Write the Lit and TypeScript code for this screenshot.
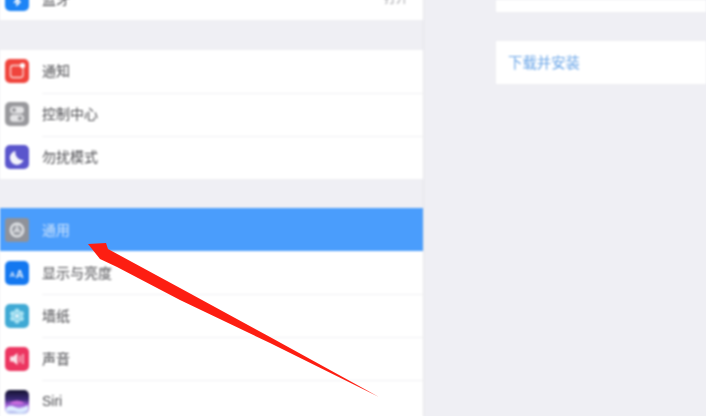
import { LitElement, html, css, svg } from "lit";
import { customElement } from "lit/decorators.js";

const icons: Record<string, unknown> = {
  bt: svg`<rect width="24" height="24" rx="5" fill="#1c84f6"/><path d="M9 8l6 7-3 3V6l3 3-6 7" fill="none" stroke="#fff" stroke-width="1.5"/>`,
  notify: svg`<rect width="24" height="24" rx="5" fill="#f0443c"/><rect x="5.5" y="6.5" width="12.5" height="12" rx="2.5" fill="#f0443c" stroke="#fbd9d6" stroke-width="1.3"/><circle cx="17.5" cy="6.5" r="2.6" fill="#fff"/>`,
  control: svg`<rect width="24" height="24" rx="5" fill="#98989c"/><rect x="5" y="4.5" width="14" height="7" rx="3.5" fill="#e4e4e6"/><circle cx="9" cy="8" r="2.1" fill="#98989c"/><rect x="5" y="12.8" width="14" height="7" rx="3.5" fill="#e4e4e6"/><circle cx="15" cy="16.3" r="2.1" fill="#98989c"/>`,
  moon: svg`<rect width="24" height="24" rx="5" fill="#5a55cc"/><path d="M10.5 6a7 7 0 1 0 8 9 7.5 7.5 0 0 1-8-9z" fill="#f4f4fb"/>`,
  gear: svg`<rect width="24" height="24" rx="3" fill="#8f929a"/><circle cx="12" cy="12" r="7.4" fill="#e3e5e8"/><circle cx="12" cy="12" r="5.2" fill="#9a9da4"/><path d="M12 7v5M7.7 14.5L12 12M16.3 14.5L12 12" stroke="#e3e5e8" stroke-width="1.4"/><circle cx="12" cy="12" r="2.2" fill="#d5d7db"/>`,
  display: svg`<rect width="24" height="24" rx="5" fill="#1478f0"/><text x="4.5" y="16" font-size="8" font-family="Liberation Sans" font-weight="700" fill="#d5e6fb">A</text><text x="10.8" y="16.5" font-size="11" font-family="Liberation Sans" font-weight="700" fill="#e6f0fc">A</text>`,
  wall: svg`<rect width="24" height="24" rx="5" fill="#3fa9d4"/><g fill="#a9e2f2"><circle cx="12" cy="7" r="2.6"/><circle cx="12" cy="17" r="2.6"/><circle cx="7.7" cy="9.5" r="2.6"/><circle cx="16.3" cy="9.5" r="2.6"/><circle cx="7.7" cy="14.5" r="2.6"/><circle cx="16.3" cy="14.5" r="2.6"/></g><circle cx="12" cy="12" r="2.2" fill="#dff4fa"/>`,
  sound: svg`<rect width="24" height="24" rx="5" fill="#ec3560"/><path d="M5 9.5h3l4.5-3.5v12L8 14.5H5z" fill="#fbe3e9"/><path d="M15 8.5v7M18 7v10" fill="none" stroke="#f9b9c8" stroke-width="1.6"/>`,
  siri: svg`<defs><linearGradient id="s" x1="0" y1="0" x2="0" y2="1"><stop offset="0" stop-color="#141230"/><stop offset=".4" stop-color="#3b2a78"/><stop offset=".62" stop-color="#a25fd8"/><stop offset="1" stop-color="#c3d8f5"/></linearGradient></defs><rect width="24" height="24" rx="5" fill="url(#s)"/><path d="M1 18q4-4 9-1t13-2v5q-6 4-11 2t-11 0z" fill="#dcebff"/><path d="M4 13q8-5 16 0-8 3-16 0z" fill="#c96cdc"/>`,
};

interface Row { icon: string; label: string; value?: string; selected?: boolean }

const groups: Row[][] = [
  [{ icon: "bt", label: "蓝牙", value: "打开" }],
  [
    { icon: "notify", label: "通知" },
    { icon: "control", label: "控制中心" },
    { icon: "moon", label: "勿扰模式" },
  ],
  [
    { icon: "gear", label: "通用", selected: true },
    { icon: "display", label: "显示与亮度" },
    { icon: "wall", label: "墙纸" },
    { icon: "sound", label: "声音" },
    { icon: "siri", label: "Siri" },
  ],
];

@customElement("app-root")
export class AppRoot extends LitElement {
  static styles = css`
    :host {
      display: block;
      width: 706px;
      height: 416px;
      overflow: hidden;
      position: relative;
      background: #efeff4;
      font-family: "Liberation Sans", "Noto Sans CJK SC", sans-serif;
    }
    .page {
      display: flex;
      height: 416px;
      filter: blur(0.8px);
    }
    .side {
      width: 423px;
      flex: none;
      display: flex;
      flex-direction: column;
      gap: 29.5px;
      margin-top: -23px;
      border-right: 1px solid #e6e6ea;
    }
    .group {
      background: #fff;
      display: flex;
      flex-direction: column;
    }
    .row {
      height: 43px;
      flex: none;
      display: flex;
      align-items: center;
      padding-left: 5px;
      gap: 13px;
      position: relative;
      font-size: 14px;
      color: #4c4c50;
    }
    .row svg { flex: none; display: block; }
    .row + .row::before {
      content: "";
      position: absolute;
      left: 42px;
      right: 0;
      top: 0;
      height: 1px;
      background: #f1f1f3;
    }
    .row.selected { background: #4a9dfc; color: #cfe4fb; }
    .row.selected + .row::before { display: none; }
    .label { flex: 1; padding-bottom: 2px; }
    .value { color: #a2a2a6; font-size: 12px; padding-right: 15px; padding-bottom: 2px; }
    .main {
      flex: 1;
      padding-left: 72px;
      display: flex;
      flex-direction: column;
      gap: 29px;
    }
    .card { background: #fff; }
    .card.top { height: 12px; }
    .card.action {
      height: 43px;
      display: flex;
      align-items: center;
      padding: 0 0 3px 12px;
      box-sizing: border-box;
      font-size: 14.4px;
      color: #6ba6e8;
    }
    .arrow {
      position: absolute;
      left: 0;
      top: 0;
      filter: blur(0.5px);
      pointer-events: none;
    }
  `;

  render() {
    return html`
      <div class="page">
        <div class="side">
          ${groups.map(
            (g) => html`<div class="group">
              ${g.map(
                (r) => html`<div class="row ${r.selected ? "selected" : ""}">
                  <svg width="24" height="24" viewBox="0 0 24 24">${icons[r.icon]}</svg>
                  <span class="label">${r.label}</span>
                  ${r.value ? html`<span class="value">${r.value}</span>` : null}
                </div>`
              )}
            </div>`
          )}
        </div>
        <div class="main">
          <div class="card top"></div>
          <div class="card action">下载并安装</div>
        </div>
      </div>
      <svg class="arrow" width="706" height="416" viewBox="0 0 706 416">
        <path d="M88 244 L106 243 L108 249 L180 288 L270 337 L379 397 L270 343 L180 300 L117 267 L100 259 Z" fill="#fd1e12"/>
      </svg>
    `;
  }
}
